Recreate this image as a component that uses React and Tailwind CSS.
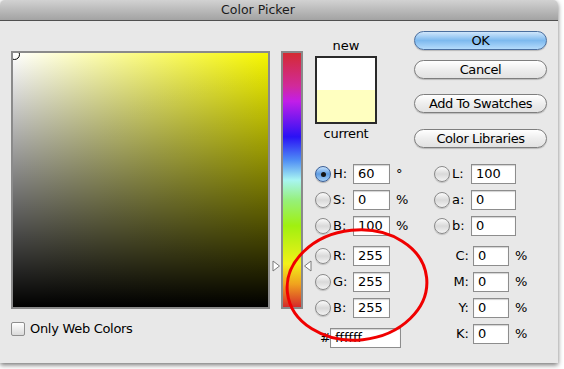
const FONT = "font-['DejaVu_Sans','Liberation_Sans',sans-serif]";

function Radio({ on }) {
  if (on) {
    return (
      <span className="w-[16px] h-[16px] shrink-0 rounded-full border border-[#3b5f96] bg-linear-to-b from-[#c4e0fb] via-[#5d9ce2] to-[#a6d0f7] flex items-center justify-center shadow-[0_1px_1px_rgba(0,0,0,0.25)]">
        <span className="w-[5px] h-[5px] rounded-full bg-[#151515]" />
      </span>
    );
  }
  return (
    <span className="w-[16px] h-[16px] shrink-0 rounded-full border border-[#8a8a8a] bg-linear-to-b from-[#fbfbfb] via-[#d9d9d9] to-[#f2f2f2] shadow-[0_1px_1px_rgba(0,0,0,0.18)]" />
  );
}

function Box({ value, width }) {
  return (
    <div
      className={`h-[20px] shrink-0 border border-[#8d8d8d] bg-white pl-[4px] text-[13px] leading-[18px] text-black shadow-[inset_0_1px_1px_rgba(0,0,0,0.18)] ${width}`}
    >
      {value}
    </div>
  );
}

function Button({ children, primary }) {
  const skin = primary
    ? 'border-[#4b6f9f] bg-linear-to-b from-[#cfe6fb] via-[#7db9ee] to-[#b4dbfb]'
    : 'border-[#7e7e7e] bg-linear-to-b from-white via-[#eeeeee] to-[#e2e2e2]';
  return (
    <div
      className={`h-[19px] w-[133px] rounded-full border ${skin} flex items-center justify-center text-[13px] tracking-[-0.4px] text-black shadow-[0_1px_1px_rgba(0,0,0,0.2)]`}
    >
      {children}
    </div>
  );
}

// H/S/B and R/G/B rows on the left, Lab and CMYK on the right
const rows = [
  { left: ['H', '60', '°', true], right: ['L', '100', 'radio'] },
  { left: ['S', '0', '%'], right: ['a', '0', 'radio'] },
  { left: ['B', '100', '%'], right: ['b', '0', 'radio'] },
  { left: ['R', '255', ''], right: ['C', '0', 'pct'], gap: true },
  { left: ['G', '255', ''], right: ['M', '0', 'pct'] },
  { left: ['B', '255', ''], right: ['Y', '0', 'pct'] },
  { left: null, right: ['K', '0', 'pct'] },
];

function RightCell({ spec }) {
  const [label, value, kind] = spec;
  if (kind === 'radio') {
    return (
      <div className="flex items-center">
        <Radio />
        <span className="ml-[2px] w-[19px] text-[13px]">{label}:</span>
        <Box value={value} width="w-[45px]" />
      </div>
    );
  }
  return (
    <div className="flex items-center">
      <span className="w-[39px] pr-[4px] text-right text-[13px]">{label}:</span>
      <Box value={value} width="w-[36px]" />
      <span className="ml-[6px] text-[13px]">%</span>
    </div>
  );
}

function LeftCell({ spec }) {
  if (!spec) {
    return (
      <div className="flex items-center pt-[4px]">
        <span className="ml-[17px] w-[10px] text-[13px]">#</span>
        <Box value="ffffff" width="w-[71px]" />
      </div>
    );
  }
  const [label, value, unit, on] = spec;
  return (
    <div className="flex items-center">
      <span className="ml-[12px]" />
      <Radio on={on} />
      <span className="ml-[2px] w-[20px] text-[13px]">{label}:</span>
      <Box value={value} width="w-[37px]" />
      <span className="ml-[6px] text-[13px]">{unit}</span>
    </div>
  );
}

export default function App() {
  return (
    <div className={`relative w-[564px] h-[369px] bg-white overflow-hidden text-black ${FONT}`}>
      <div className="relative w-[558px] h-[363px] rounded-t-[5px] bg-[#e8e8e8] shadow-[0_2px_5px_rgba(0,0,0,0.55)]">
        {/* title bar */}
        <div className="h-[21px] rounded-t-[5px] border-b border-[#505050] bg-linear-to-b from-[#d2d2d2] to-[#a3a3a3] flex items-center justify-center pr-[42px] text-[12.5px] text-[#1a1a1a]">
          Color Picker
        </div>

        <div className="flex items-start">
          {/* colour field */}
          <div className="ml-[11px] mt-[30px] flex flex-col">
            <div className="relative w-[259px] h-[258px] border-2 border-[#8a8a8a] overflow-hidden bg-[linear-gradient(to_bottom,transparent,#000),linear-gradient(to_right,#fff,#f6f600)]">
              <div className="absolute -left-[4px] -top-[4px] w-[11px] h-[11px] rounded-full border border-black" />
            </div>
            <div className="mt-[10px] flex items-center gap-[5px]">
              <span className="w-[14px] h-[14px] rounded-[2px] border border-[#8e8e8e] bg-linear-to-b from-white to-[#dadada]" />
              <span className="text-[13px] tracking-[-0.3px]">Only Web Colors</span>
            </div>
          </div>

          {/* hue strip */}
          <div className="relative ml-[11px] mt-[30px] w-[22px] h-[258px] border-2 border-[#8a8a8a] bg-[linear-gradient(to_bottom,#d42b32,#d12a9a_13%,#c21ee8_19%,#2a12f5_33%,#4d8af5_42%,#a8f5f2_50%,#96f07a_58%,#a0f010_68%,#f2f018_83%,#f0a21e_91%,#d42b2b)]">
            <svg className="absolute -left-[11px] top-[207px]" width="9" height="12" viewBox="0 0 9 12">
              <path d="M1 1 L7.5 6 L1 11 Z" fill="#fff" stroke="#7a7a7a" />
            </svg>
            <svg className="absolute left-[20px] top-[207px]" width="9" height="12" viewBox="0 0 9 12">
              <path d="M8 1 L1.5 6 L8 11 Z" fill="#fff" stroke="#7a7a7a" />
            </svg>
          </div>

          {/* right side */}
          <div className="flex flex-col">
            <div className="h-[127px] flex items-start">
              <div className="ml-[12px] mt-[18px] w-[62px] flex flex-col items-center">
                <span className="text-[13px] leading-[14px]">new</span>
                <div className="mt-[3px] w-[62px] h-[68px] border-2 border-[#2a2a2a] flex flex-col">
                  <div className="flex-1 bg-white" />
                  <div className="flex-1 bg-[#ffffc0]" />
                </div>
                <span className="mt-[3px] text-[13px] leading-[14px] tracking-[-0.3px]">current</span>
              </div>
              <div className="ml-[37px] mt-[10px] flex flex-col">
                <Button primary>OK</Button>
                <div className="mt-[10px]"><Button>Cancel</Button></div>
                <div className="mt-[15px]"><Button>Add To Swatches</Button></div>
                <div className="mt-[16px]"><Button>Color Libraries</Button></div>
              </div>
            </div>

            <div className="mt-[16px] flex flex-col">
              {rows.map((r, i) => (
                <div
                  key={i}
                  className={`flex h-[20px] ${i === 0 ? '' : r.gap ? 'mt-[10px]' : 'mt-[6px]'}`}
                >
                  <div className="w-[131px]">
                    <LeftCell spec={r.left} />
                  </div>
                  <RightCell spec={r.right} />
                </div>
              ))}
            </div>
          </div>
        </div>

        {/* red annotation */}
        <svg className="absolute left-0 top-0 pointer-events-none" width="558" height="363">
          <ellipse cx="357" cy="285" rx="70" ry="55" fill="none" stroke="#f00000" strokeWidth="3" transform="rotate(-6 357 285)" />
        </svg>
      </div>
    </div>
  );
}
